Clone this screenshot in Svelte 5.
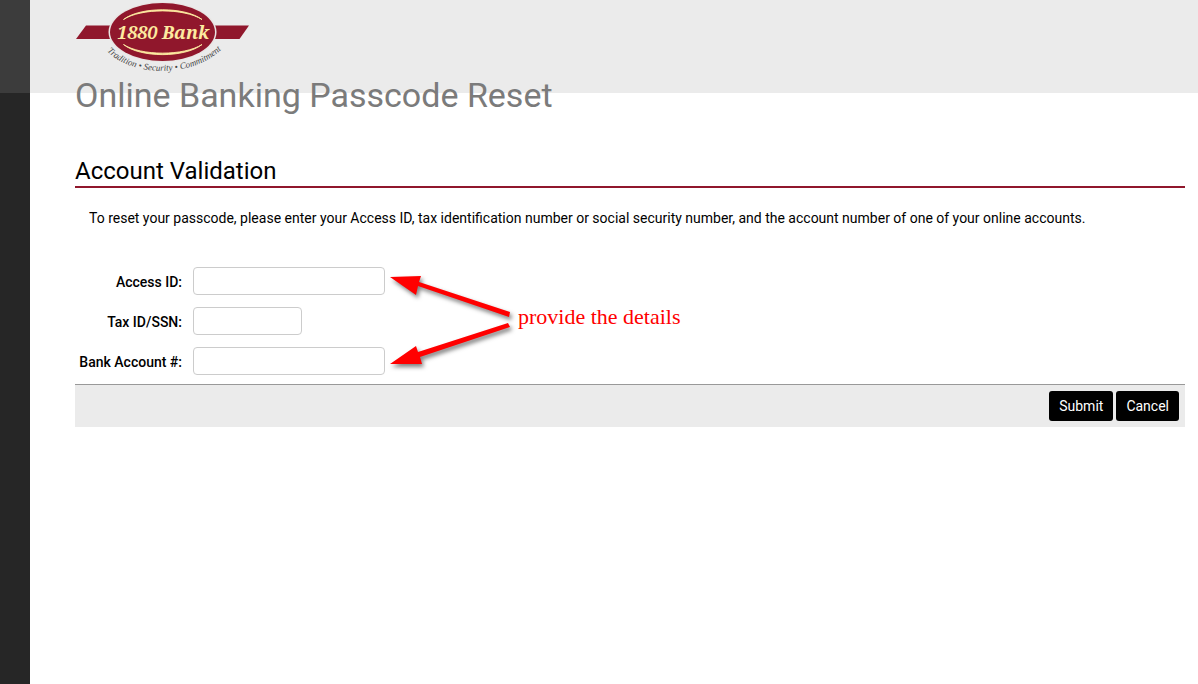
<script>
  const fields = [
    { id: 'access-id', label: 'Access ID:', size: 'wide' },
    { id: 'tax-id', label: 'Tax ID/SSN:', size: 'short' },
    { id: 'bank-account', label: 'Bank Account #:', size: 'wide' }
  ];

  let values = $state({});

  function reset() {
    values = {};
  }
</script>

<div class="page">
  <div class="side"></div>
  <main>
    <header>
      <svg class="logo" viewBox="0 0 176 78" role="img" aria-label="1880 Bank">
        <path d="M11 25.500H174L164.500 39H1Z" fill="#90172c" />
        <ellipse cx="87.500" cy="32" rx="54" ry="30" fill="#e9e4e2" />
        <ellipse cx="87.500" cy="32" rx="52.500" ry="29" fill="#90172c" />
        <path d="M48.500 19.500C65 6.500 110 6.500 127 19.500C109 8 66 8 48.500 19.500Z" fill="#fdeaa0" stroke="#fdeaa0" stroke-width="0.900" />
        <path d="M48.500 44.500C65 58 110 58 127 44.500C109 56 66 56 48.500 44.500Z" fill="#fdeaa0" stroke="#fdeaa0" stroke-width="0.900" />
        <text class="brand" x="88" y="39" text-anchor="middle">1880 Bank</text>
        <path id="arc" d="M32 51C56 77 118 79 148 48" fill="none" />
        <text class="tagline"><textPath href="#arc">Tradition • Security • Commitment</textPath></text>
      </svg>
    </header>

    <h1>Online Banking Passcode Reset</h1>
    <h2>Account Validation</h2>
    <p>
      To reset your passcode, please enter your Access ID, tax identification number or social
      security number, and the account number of one of your online accounts.
    </p>

    <form onsubmit={(e) => e.preventDefault()}>
      <div class="fields">
        {#each fields as field}
          <label for={field.id}>{field.label}</label>
          <input id={field.id} class={field.size} type="text" bind:value={values[field.id]} />
        {/each}

        <div class="note">
          <svg viewBox="0 0 126 100" aria-hidden="true">
            <path d="M0 10L31 9L29 15L120 45L119 50L28 19L26 28Z" />
            <path d="M0 97L26 79L28 85L118 56L120 60L30 90L32 97Z" />
          </svg>
          <span>provide the details</span>
        </div>
      </div>

      <div class="actions">
        <button type="submit">Submit</button>
        <button type="button" onclick={reset}>Cancel</button>
      </div>
    </form>
  </main>
</div>

<style>
  :global(body) {
    margin: 0;
    background: #fff;
    color: #000;
    font-family: Roboto, "Liberation Sans", sans-serif;
  }
  .page {
    display: flex;
    min-height: 100vh;
    background: linear-gradient(#ebebeb 93px, #fff 93px);
  }
  .side {
    flex: 0 0 30px;
    background: linear-gradient(#3c3c3c 93px, #262626 93px);
  }
  main {
    flex: 1;
    min-width: 0;
    padding: 0 13px 0 45px;
  }
  header {
    height: 75px;
  }
  .logo {
    display: block;
    width: 176px;
    height: 78px;
  }
  .brand {
    fill: #fdeaa0;
    font-family: "Noto Serif", "Liberation Serif", serif;
    font-size: 18px;
    font-style: italic;
    font-weight: bold;
  }
  .tagline {
    fill: #444;
    font-family: "Liberation Serif", serif;
    font-size: 9px;
    font-style: italic;
  }
  h1 {
    margin: 0;
    color: #7b7b7b;
    font-size: 34px;
    font-weight: 400;
    line-height: 40px;
  }
  h2 {
    margin: 41px 0 0;
    border-bottom: 2px solid #90172c;
    font-size: 24px;
    font-weight: 400;
    line-height: 30px;
  }
  p {
    margin: 20px 14px 0;
    font-size: 14px;
    line-height: 20px;
  }
  .fields {
    position: relative;
    display: grid;
    grid-template-columns: 107px 1fr;
    gap: 12px 11px;
    align-items: center;
    margin-top: 39px;
    padding-bottom: 9px;
  }
  label {
    padding-top: 2px;
    font-size: 14px;
    font-weight: 500;
    line-height: 20px;
    text-align: right;
  }
  input {
    box-sizing: border-box;
    height: 28px;
    padding: 4px 6px;
    border: 1px solid #ccc;
    border-radius: 4px;
    background: #fff;
    font: inherit;
    font-size: 14px;
  }
  .wide {
    width: 192px;
  }
  .short {
    width: 109px;
  }
  .note {
    position: absolute;
    top: 0;
    left: 315px;
    display: flex;
    align-items: center;
    gap: 2px;
    color: #f00;
    font-family: "Liberation Serif", serif;
    font-size: 22px;
    line-height: 26px;
  }
  .note svg {
    width: 126px;
    height: 100px;
    fill: #f00;
    filter: drop-shadow(2px 3px 2px rgba(0, 0, 0, 0.5));
  }
  .actions {
    display: flex;
    justify-content: flex-end;
    gap: 3px;
    padding: 6px;
    border-top: 1px solid #999;
    background: #ebebeb;
  }
  button {
    height: 30px;
    padding: 0 10px;
    border: 0;
    border-radius: 3px;
    background: #000;
    color: #fff;
    font-family: inherit;
    font-size: 14px;
  }
</style>
